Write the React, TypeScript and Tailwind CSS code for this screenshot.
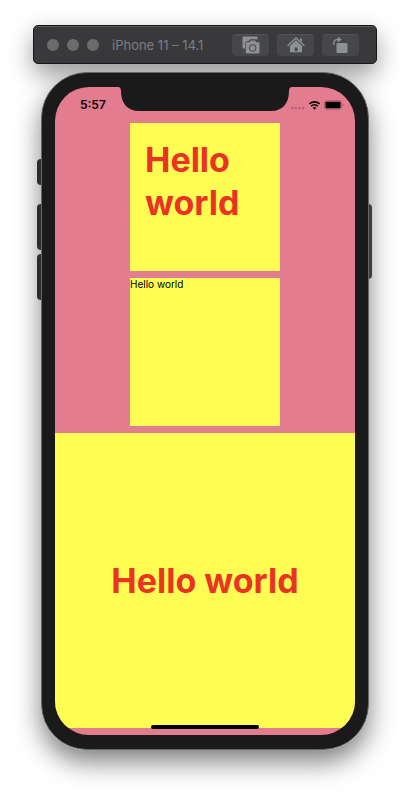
import type { ReactNode } from "react";

function ToolbarButton({ label, children }: { label: string; children: ReactNode }) {
  return (
    <button
      type="button"
      aria-label={label}
      className="flex h-[22px] w-[37px] items-center justify-center rounded border-t border-[#525355] bg-[#464749]"
    >
      {children}
    </button>
  );
}

function ScreenshotIcon() {
  return (
    <svg width="18" height="18" viewBox="0 0 18 18" aria-hidden="true">
      <path
        d="M1.5.5h13a1 1 0 0 1 1 1V4l-1-.7H8.200L6.700 5.200H5A1.800 1.800 0 0 0 3.200 7v5.500H1.500a1 1 0 0 1-1-1v-10a1 1 0 0 1 1-1Z"
        fill="#8f9092"
      />
      <path
        d="M5 6.300h2.600L8.900 4.500h4.200l1.300 1.800h1.900a1.200 1.200 0 0 1 1.200 1.200v8.800a1.200 1.200 0 0 1-1.200 1.200H5a1.200 1.200 0 0 1-1.200-1.200V7.500A1.200 1.200 0 0 1 5 6.300Z"
        fill="#8f9092"
      />
      <circle cx="10.700" cy="12" r="3.300" fill="none" stroke="#464749" />
    </svg>
  );
}

function HomeIcon() {
  return (
    <svg width="18" height="16" viewBox="0 0 18 16" aria-hidden="true">
      <path d="M1 8.500 9 1l8 7.500" fill="none" stroke="#8f9092" strokeWidth="1.400" strokeLinecap="round" />
      <path d="M13 1.500h2V5l-2-2Z" fill="#8f9092" />
      <path d="M9 3.300 15 9v5.500a.8.8 0 0 1-.8.8H3.800a.8.8 0 0 1-.8-.8V9Z" fill="#8f9092" />
      <path d="M7.700 10.500h2.800v3.700H7.700Z" fill="#464749" />
    </svg>
  );
}

function RotateIcon() {
  return (
    <svg width="18" height="18" viewBox="0 0 18 18" aria-hidden="true">
      <path d="M1.800 8.500V7a3.300 3.300 0 0 1 3.300-3.400h1.500" fill="none" stroke="#8f9092" strokeWidth="1.400" strokeLinecap="round" />
      <path d="M5.800.8 9.700 3.600 5.800 6.400Z" fill="#8f9092" />
      <rect x="4.500" y="7" width="11" height="10" rx="1.500" fill="#8f9092" />
    </svg>
  );
}

function Toolbar() {
  return (
    <header className="flex h-[39px] items-center rounded-[5px] border border-[#161616] bg-[#39393b] pr-[17px] pl-[13px] shadow-[inset_0_1px_0_#5c5c5e,0_10px_24px_rgba(0,0,0,0.4)]">
      <div className="flex gap-2">
        <span className="size-3 rounded-full bg-[#6b6c6b]" />
        <span className="size-3 rounded-full bg-[#6b6c6b]" />
        <span className="size-3 rounded-full bg-[#6b6c6b]" />
      </div>
      <h1 className="ml-[13px] text-[13px] leading-4 whitespace-nowrap text-[#7d7e80]">iPhone 11 – 14.1</h1>
      <div className="ml-auto flex gap-2">
        <ToolbarButton label="Screenshot">
          <ScreenshotIcon />
        </ToolbarButton>
        <ToolbarButton label="Home">
          <HomeIcon />
        </ToolbarButton>
        <ToolbarButton label="Rotate">
          <RotateIcon />
        </ToolbarButton>
      </div>
    </header>
  );
}

function StatusBar() {
  return (
    <div className="flex h-9 items-center justify-between pr-[11px] pl-[25px]">
      <time className="text-xs leading-4 font-semibold text-black">5:57</time>
      <div className="flex items-center gap-1">
        <svg width="14" height="10" viewBox="0 0 14 10" aria-hidden="true">
          <g fill="#b5616f">
            <rect x="0" y="7" width="2.500" height="2.300" rx=".8" />
            <rect x="3.600" y="7" width="2.500" height="2.300" rx=".8" />
            <rect x="7.200" y="7" width="2.500" height="2.300" rx=".8" />
            <rect x="10.800" y="7" width="2.500" height="2.300" rx=".8" />
          </g>
        </svg>
        <svg width="11" height="9" viewBox="0 0 11 9" aria-hidden="true">
          <g fill="none" stroke="#000" strokeWidth="1.600">
            <path d="M.4 3a7.200 7.200 0 0 1 10.200 0" />
            <path d="M2.200 5.200a4.600 4.600 0 0 1 6.600 0" />
          </g>
          <path d="M3.800 6.900a2.300 2.300 0 0 1 3.400 0L5.500 8.700Z" />
        </svg>
        <svg width="20" height="10" viewBox="0 0 20 10" aria-hidden="true">
          <rect x=".5" y=".8" width="17" height="8.400" rx="2.200" fill="none" stroke="#a95b6a" />
          <rect x="1.500" y="1.800" width="15" height="6.400" rx="1" />
          <path d="M18.500 3.500c1.300.4 1.300 2.600 0 3Z" fill="#a95b6a" />
        </svg>
      </div>
    </div>
  );
}

function Notch() {
  return (
    <svg
      className="absolute top-0 left-1/2 -translate-x-1/2"
      width="174"
      height="24"
      viewBox="0 0 174 24"
      aria-hidden="true"
    >
      <path d="M0 0Q3 0 3 4C3 16 9 24 21 24H153C165 24 171 16 171 4Q171 0 174 0Z" fill="#1a1a1a" />
    </svg>
  );
}

function Phone() {
  return (
    <main className="relative mx-2 mt-2 rounded-[46px] shadow-[0_12px_26px_rgba(0,0,0,0.5)]">
      <span className="absolute top-[87px] -left-1 h-[26px] w-2 rounded-l-sm bg-[#2c2c2c]" />
      <span className="absolute top-[132px] -left-1 h-[46px] w-2 rounded-l-sm bg-[#2c2c2c]" />
      <span className="absolute top-[182px] -left-1 h-[46px] w-2 rounded-l-sm bg-[#2c2c2c]" />
      <span className="absolute top-[132px] -right-[3px] h-[75px] w-2 rounded-r-sm bg-[#3c3c3c]" />
      <div className="relative rounded-[46px] border border-[#66696a] bg-[#1a1a1a] px-[13px] py-[14px]">
        <div className="relative overflow-hidden rounded-[34px] bg-[#e47c90]">
          <StatusBar />
          <Notch />
          <div className="flex flex-col items-center gap-[7px] pb-[7px]">
            <p className="h-[148px] w-1/2 bg-[#fffd54] p-[15px] text-[34px] leading-[43px] font-bold text-[#ea3323]">
              Hello world
            </p>
            <p className="h-[148px] w-1/2 bg-[#fffd54] text-[10px] leading-3 text-black">Hello world</p>
            <p className="flex h-[295px] w-full items-center justify-center bg-[#fffd54] text-[34px] leading-[43px] font-bold text-[#ea3323]">
              Hello world
            </p>
          </div>
          <span className="absolute bottom-1.5 left-1/2 h-1 w-[108px] -translate-x-1/2 rounded-full bg-black" />
        </div>
      </div>
    </main>
  );
}

export default function App() {
  return (
    <div className="min-h-screen bg-white px-[33px] pt-[25px] pb-[42px] font-[Inter,Roboto,sans-serif]">
      <div className="mx-auto max-w-[344px]">
        <Toolbar />
        <Phone />
      </div>
    </div>
  );
}
